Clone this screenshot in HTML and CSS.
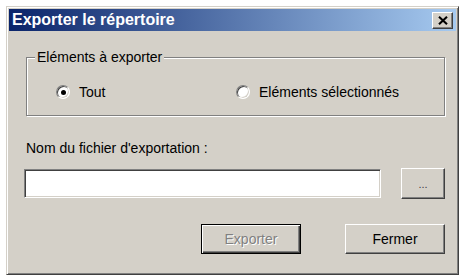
FILE: index.html
```html
<!DOCTYPE html>
<html>
<head>
    <title>Exporter le répertoire</title>
    <link rel="stylesheet" href="styles.css">
</head>
<body>
    <div class="window">
        <div class="title-bar">
            <span class="title-text">Exporter le répertoire</span>
            <span class="close-button">
                <svg width="10" height="9" viewBox="0 0 10 9">
                    <path d="M1 0.8 L9 8.2 M9 0.8 L1 8.2" stroke="#000" stroke-width="2.1" fill="none"/>
                </svg>
            </span>
        </div>

        <div class="content">
            <div class="group-box">
                <span class="group-label">Eléments à exporter</span>
                <div class="radio-row">
                    <label class="radio-item">
                        <span class="radio checked"></span>
                        <span>Tout</span>
                    </label>
                    <label class="radio-item">
                        <span class="radio"></span>
                        <span>Eléments sélectionnés</span>
                    </label>
                </div>
            </div>

            <div class="field-label">Nom du fichier d'exportation :</div>
            <div class="input-row">
                <div class="text-input"></div>
                <button class="btn btn-browse">...</button>
            </div>

            <div class="button-row">
                <button class="btn btn-default" disabled>Exporter</button>
                <button class="btn">Fermer</button>
            </div>
        </div>
    </div>
</body>
</html>
```

FILE: styles.css
```css
body {
    margin: 0;
    padding: 6px;
    background-color: #fff;
    font-family: "Liberation Sans", Arial, sans-serif;
    font-size: 14px;
    color: #000;
}

.window {
    width: 453px;
    height: 269px;
    box-sizing: border-box;
    padding: 2px;
    background-color: #d4d0c8;
    border: 1px solid;
    border-color: #d4d0c8 #404040 #404040 #d4d0c8;
    box-shadow: inset 1px 1px #fff, inset -1px -1px #808080;
}

.title-bar {
    height: 22px;
    display: flex;
    align-items: center;
    justify-content: space-between;
    padding: 0 3px;
    background: linear-gradient(to right, #0a246a, #a6caf0);
}

.title-text {
    color: #fff;
    font-weight: bold;
    font-size: 16px;
}

.close-button {
    width: 21px;
    height: 17px;
    box-sizing: border-box;
    display: flex;
    align-items: center;
    justify-content: center;
    background-color: #d4d0c8;
    border: 1px solid;
    border-color: #fff #404040 #404040 #fff;
    box-shadow: inset -1px -1px #808080;
}

.content {
    padding: 0 11px 0 15px;
}

.group-box {
    position: relative;
    margin: 26px 0 0 2px;
    height: 59px;
    box-sizing: border-box;
    border: 1px solid #808080;
    box-shadow: inset 1px 1px #fff, 1px 1px #fff;
}

.group-label {
    position: absolute;
    top: -9px;
    left: 8px;
    padding: 0 2px;
    line-height: 16px;
    background-color: #d4d0c8;
}

.radio-row {
    display: grid;
    grid-template-columns: 180px auto;
    padding: 26px 0 0 29px;
    line-height: 16px;
}

.radio-item {
    display: flex;
    align-items: center;
    gap: 9px;
}

.radio {
    position: relative;
    width: 12px;
    height: 12px;
    border-radius: 50%;
    background-color: #fff;
    border: 1px solid;
    border-color: #808080 #fff #fff #808080;
    box-shadow: inset 1px 1px #404040, inset -1px -1px #d4d0c8;
}

.radio.checked::after {
    content: "";
    position: absolute;
    top: 3.5px;
    left: 3.5px;
    width: 5px;
    height: 5px;
    border-radius: 50%;
    background-color: #000;
}

.field-label {
    margin: 24px 0 0 2px;
    line-height: 16px;
}

.input-row {
    display: flex;
    align-items: center;
    justify-content: space-between;
    margin-top: 12px;
    height: 31px;
}

.text-input {
    width: 357px;
    height: 29px;
    box-sizing: border-box;
    background-color: #fff;
    border: 1px solid;
    border-color: #808080 #fff #fff #808080;
    box-shadow: inset 1px 1px #404040, inset -1px -1px #d4d0c8;
}

.btn {
    width: 100px;
    height: 30px;
    box-sizing: border-box;
    padding: 0;
    font-family: inherit;
    font-size: 14px;
    color: #000;
    background-color: #d4d0c8;
    border: 1px solid;
    border-color: #fff #404040 #404040 #fff;
    box-shadow: inset -1px -1px #808080;
}

.btn-browse {
    width: 44px;
    height: 31px;
    font-size: 11px;
    color: #404040;
}

.btn:disabled {
    color: #808080;
    text-shadow: 1px 1px #fff;
}

.btn-default {
    border: 1px solid #000;
    box-shadow: inset 1px 1px #fff, inset -1px -1px #404040, inset -2px -2px #808080;
}

.button-row {
    display: flex;
    justify-content: flex-end;
    gap: 44px;
    margin-top: 25px;
}
```
